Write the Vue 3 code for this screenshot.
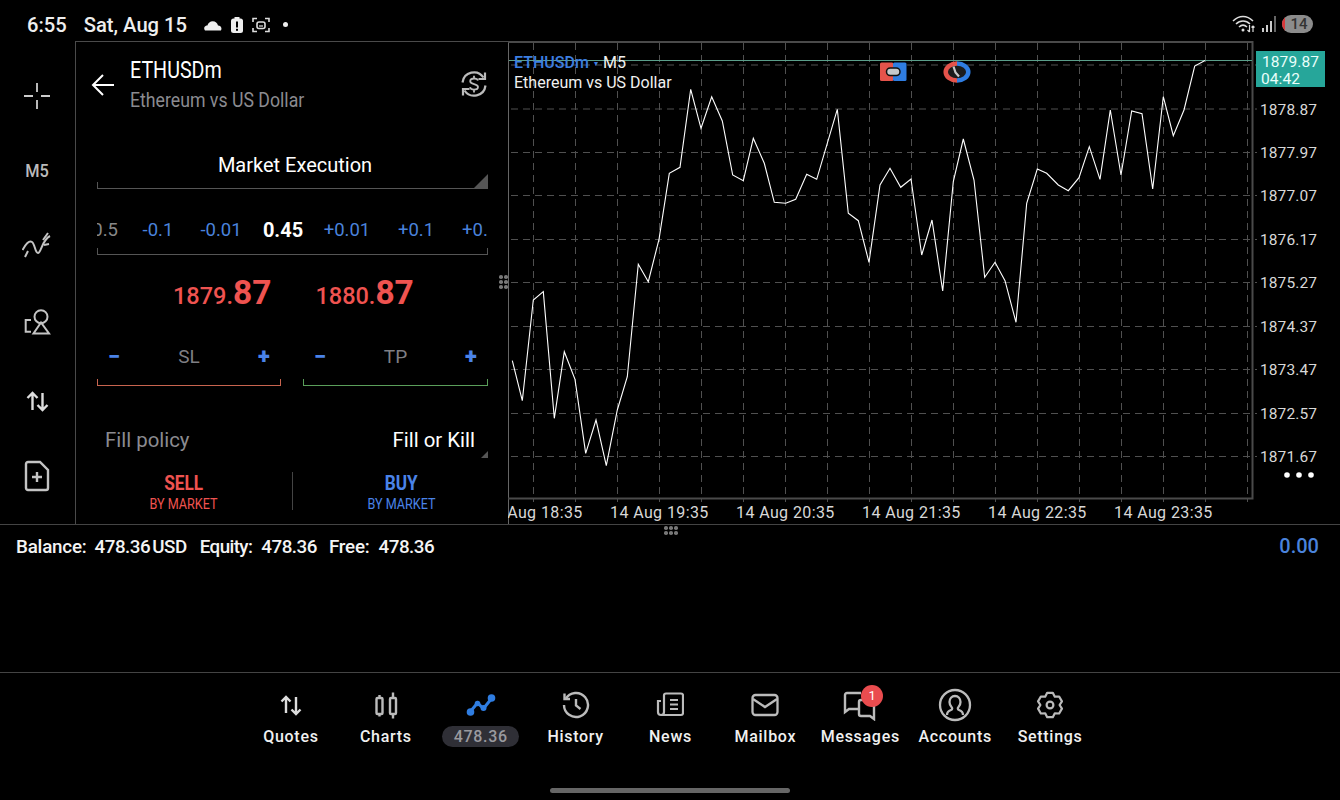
<script setup>
const pts = "512.3,360.7 522.3,400.7 533.3,300 543.3,291.7 554.3,418.3 564.3,351.7 575,379.3 585.7,453.3 596,420 606.3,465.7 617.3,410 627.3,376.7 638.3,264.3 648.3,281.7 659,239.3 669.3,173.3 680,167.3 690.7,89.3 701,128.3 711.7,96.7 722.3,121 732.7,175 743.3,180.7 753.3,138.3 764.3,163.3 774.3,202.3 785.7,203.3 795.7,199.3 806.7,174.3 816.7,179.3 837.3,109.3 848.3,213.3 858.3,220.7 869,262.3 880,185 890,168.3 900.7,187.3 911,179 921.7,255 932,220 942.7,291 953.3,181.7 963.3,139 974,180 984.7,277.3 995,262.3 1005,280.7 1016,322.3 1026.7,203.3 1037.3,169 1046.7,173.3 1058.3,185 1068.3,190.7 1079,177.7 1089.3,146.7 1100,179.3 1110.3,110 1121,175 1131.7,111 1142,113.7 1152.7,189 1163.3,96.7 1173.3,135.7 1184,110 1194.7,66 1205,60.5"

const gridX = Array.from({ length: 18 }, (_, i) => 533.5 + i * 42)
const gridY = [65, 109, 152.5, 195.5, 239.5, 282.5, 326.5, 369.5, 413.5, 456.5]
const prices = [
  ['1878.87', 109], ['1877.97', 152.5], ['1877.07', 195.5], ['1876.17', 239.5], ['1875.27', 282.5],
  ['1874.37', 326.5], ['1873.47', 369.5], ['1872.57', 413.5], ['1871.67', 456.5]
]
const times = [
  ['14 Aug 18:35', 484], ['14 Aug 19:35', 610], ['14 Aug 20:35', 736],
  ['14 Aug 21:35', 862], ['14 Aug 22:35', 988], ['14 Aug 23:35', 1114]
]
const navItems = [
  { label: 'Quotes', icon: 'quotes' }, { label: 'Charts', icon: 'charts' }, { label: '478.36', icon: 'trade', pill: true },
  { label: 'History', icon: 'history' }, { label: 'News', icon: 'news' }, { label: 'Mailbox', icon: 'mail' },
  { label: 'Messages', icon: 'msg' }, { label: 'Accounts', icon: 'acct' }, { label: 'Settings', icon: 'gear' }
]
const lots = [
  { t: '-0.1', w: 80 }, { t: '-0.01', w: 46 }, { t: '0.45', w: 78, cur: true }, { t: '+0.01', w: 50 }, { t: '+0.1', w: 88 }
]

const gearPoints = (() => {
  const p = []
  const at = (deg, r) => {
    const a = (deg * Math.PI) / 180
    return `${(14 + r * Math.cos(a)).toFixed(2)},${(14 + r * Math.sin(a)).toFixed(2)}`
  }
  for (let i = 0; i < 6; i++) {
    const a = -90 + 60 * i
    p.push(at(a - 13, 12.5), at(a + 13, 12.5), at(a + 30, 9.6))
  }
  return p.join(' ')
})()
</script>

<template>
  <div class="screen">
    <header class="status">
      <div class="st-left">
        <span class="time">6:55</span>
        <span class="date">Sat, Aug 15</span>
        <svg class="st-ic" width="20" height="14" viewBox="0 0 20 14"><path d="M2 12.500c-1.800-2.400-.3-5 2.400-5 .7-2.600 2.800-4.300 5.300-4.300 2.700 0 4.700 1.700 5.300 4.200 2.800-.2 4.400 2.800 2.900 5.100z" fill="#eee"/></svg>
        <svg class="st-ic" width="14" height="18" viewBox="0 0 14 18"><rect x="1" y="2.500" width="12" height="14.500" rx="2.500" fill="#eee"/><rect x="4.500" y="1" width="5" height="2.500" fill="#eee"/><rect x="6" y="5.500" width="2" height="6" fill="#000"/><rect x="6" y="12.800" width="2" height="2" fill="#000"/></svg>
        <svg class="st-ic" width="20" height="18" viewBox="0 0 20 18" fill="none" stroke="#ddd" stroke-width="1.600"><path d="M2 6V2.500h4M14 2.500h4V6M2 12v3.500h4M14 15.500h4V12"/><rect x="6" y="6" width="8" height="6.500" rx="2"/><path d="M8 10h4" stroke-width="1.200"/></svg>
        <span class="st-dot"></span>
      </div>
      <div class="st-right">
        <svg width="24" height="18" viewBox="0 0 24 18" fill="none" stroke="#ddd" stroke-width="1.500"><path d="M1 6c6-6 14-6 20 0M4 9c4-4 10-4 14 0M7 12c2.500-2.500 5.500-2.500 8 0"/><circle cx="11" cy="15" r="1.500" fill="#ddd" stroke="none"/><path d="M17.500 10v7M15.500 15l2 2M21 17v-6M19.500 12.500l1.500-1.500 1.500 1.500" stroke-width="1.200"/></svg>
        <svg width="16" height="18" viewBox="0 0 16 18"><rect x="1" y="13" width="2" height="4" fill="#ccc"/><rect x="5" y="10" width="2" height="7" fill="#ccc"/><rect x="9" y="6" width="2" height="11" fill="#ccc"/><rect x="13" y="1" width="2" height="16" fill="#666"/></svg>
        <span class="batt"><i></i>14</span>
      </div>
    </header>

    <div class="workspace">
      <nav class="tools">
        <div class="tool">
          <svg width="28" height="28" viewBox="0 0 28 28" stroke="#ccc" stroke-width="1.800"><path d="M1 14h9M18 14h9M14 1v9M14 18v9"/></svg>
        </div>
        <div class="tool m5">M5</div>
        <div class="tool raise">
          <svg width="30" height="28" viewBox="0 0 30 28" fill="none" stroke="#c4c4c4" stroke-width="2"><path d="M.5 18C4 12 7 8 10 10s3 11 6 11 4-13 12-17"/><path d="M3 25l3-6M21 8l5-7M22 13l5-1"/></svg>
        </div>
        <div class="tool raise">
          <svg width="28" height="28" viewBox="0 0 28 28" fill="none" stroke="#c4c4c4" stroke-width="2"><path d="M8 12H2.700v11.700H8"/><circle cx="18" cy="8.700" r="6.500"/><path d="M18 14.500 10.500 25.500H26z"/></svg>
        </div>
        <div class="tool lower">
          <svg width="25" height="24" viewBox="0 0 24 24" fill="none" stroke="#ddd" stroke-width="2.400"><path d="M7 21V4M2 9l5-5 5 5M17 4v17M12 16l5 5 5-5"/></svg>
        </div>
        <div class="tool">
          <svg width="26" height="32" viewBox="0 0 26 32" fill="none" stroke="#c4c4c4" stroke-width="2.400"><path d="M2 4a2 2 0 0 1 2-2h12l8 8v18a2 2 0 0 1-2 2H4a2 2 0 0 1-2-2z"/><path d="M13 12v10M8 17h10"/></svg>
        </div>
      </nav>

      <section class="panel">
        <div class="head">
          <svg class="back" width="24" height="24" viewBox="0 0 24 24" fill="none" stroke="#fff" stroke-width="2"><path d="M23 12H2M12 2 2 12l10 10"/></svg>
          <div class="titles">
            <div class="sym">ETHUSDm</div>
            <div class="symname">Ethereum vs US Dollar</div>
          </div>
          <svg class="swap" width="28" height="28" viewBox="0 0 28 28" fill="none" stroke="#bbb" stroke-width="2.200"><path d="M2.500 12.500A11.500 11.500 0 0 1 23.500 7.500M25.500 15.500A11.500 11.500 0 0 1 4.500 20.500"/><path d="M25 2.500v6.500h-6.500M3 25.500V19h6.500"/><path d="M18 10.500c-.5-1.400-2-2-4-2-2.400 0-3.800 1.100-3.800 2.700 0 3.800 7.800 2 7.800 5.800 0 1.600-1.600 2.600-4 2.600-2.100 0-3.600-.9-4.100-2.400M14 5.800v2.700M14 20v2.500" stroke-width="1.800"/></svg>
        </div>

        <div class="field exec">
          <span>Market Execution</span>
          <i class="corner"></i>
        </div>

        <div class="field lots">
          <span class="lot-clip first">0.5</span>
          <span v-for="l in lots" :key="l.t" class="lot" :class="{ cur: l.cur }" :style="{ width: l.w + 'px' }">{{ l.t }}</span>
          <span class="lot-clip last">+0.5</span>
        </div>

        <div class="quotes">
          <span class="price"><small>1879.</small>87</span>
          <span class="price"><small>1880.</small>87</span>
        </div>

        <div class="levels">
          <div class="level sl"><b>−</b><span>SL</span><b>+</b></div>
          <div class="level tp"><b>−</b><span>TP</span><b>+</b></div>
        </div>

        <div class="fill">
          <span class="muted">Fill policy</span>
          <span>Fill or Kill</span>
          <i class="corner small"></i>
        </div>

        <div class="actions">
          <div class="act sell"><strong>SELL</strong><em>BY MARKET</em></div>
          <div class="act buy"><strong>BUY</strong><em>BY MARKET</em></div>
        </div>
        <span class="grip side"><i v-for="n in 6" :key="n"></i></span>
      </section>

      <div class="chart">
        <svg class="chart-svg" width="832" height="483" viewBox="508 41 832 483">
          <g stroke="#505050" stroke-width="1" stroke-dasharray="7 5">
            <line v-for="x in gridX" :key="x" :x1="x" y1="43" :x2="x" y2="498"/>
            <line v-for="y in gridY" :key="y" x1="511" :y1="y" x2="1257" :y2="y"/>
          </g>
          <g stroke="#505050" stroke-width="1">
            <line v-for="x in gridX" :key="'t' + x" :x1="x" y1="498" :x2="x" y2="502"/>
          </g>
          <path d="M508.500 524V42" fill="none" stroke="#666" stroke-width="1"/>
          <path d="M508 42H1252.500V498.500H508" fill="none" stroke="#4a4a4a" stroke-width="2"/>
          <line x1="509" y1="60.500" x2="1252" y2="60.500" stroke="#5b9f8b" stroke-width="1"/>
          <polyline :points="pts" fill="none" stroke="#fff" stroke-width="1.100"/>

          <text x="514" y="68" class="c-sym">ETHUSDm</text>
          <text x="594" y="66" class="c-arrow">▾</text>
          <text x="603" y="68" class="c-txt">M5</text>
          <text x="514" y="88" class="c-txt">Ethereum vs US Dollar</text>

          <g>
            <rect x="880" y="62.500" width="13.500" height="18.500" rx="1.500" fill="#e5534b"/>
            <rect x="893" y="62.500" width="13.500" height="18.500" rx="1.500" fill="#2f7de1"/>
            <rect x="886.500" y="68" width="13.500" height="7.500" rx="3.700" fill="#c6c9cc" stroke="#111" stroke-width="1.500"/>
          </g>
          <ellipse cx="957" cy="72" rx="10" ry="8" fill="#1c1c1c"/>
          <g fill="none" stroke-width="4.500">
            <path d="M957 63.500a11.300 8.500 0 0 0 0 17" stroke="#e5534b"/>
            <path d="M957 63.500a11.300 8.500 0 0 1 0 17" stroke="#2f7de1"/>
          </g>
          <path d="M953.500 66.500 955.500 72.500l3.500 4" fill="none" stroke="#c9c9c9" stroke-width="2.200"/>

          <rect x="1256" y="51" width="69" height="36" fill="#26a69a"/>
          <text x="1262" y="66.500" class="tag">1879.87</text>
          <text x="1261" y="84" class="tag">04:42</text>

          <g v-for="p in prices" :key="p[0]">
            <text x="1260" :y="p[1] + 5.500" class="axis">{{ p[0] }}</text>
          </g>
          <g v-for="t in times" :key="t[0]">
            <text :x="t[1]" y="518" class="axis-t">{{ t[0] }}</text>
          </g>
          <g fill="#fff">
            <circle cx="1287" cy="475" r="2.800"/><circle cx="1299" cy="475" r="2.800"/><circle cx="1311" cy="475" r="2.800"/>
          </g>
        </svg>
      </div>
    </div>

    <div class="account">
      <span class="grip bottom"><i v-for="n in 6" :key="n"></i></span>
      <div class="bal">
        <span>Balance:</span><span class="v1">478.36 USD</span>
        <span class="eq">Equity:</span><span class="v2">478.36</span>
        <span>Free:</span><span class="v2">478.36</span>
      </div>
      <div class="profit">0.00</div>
    </div>

    <footer class="nav">
      <div v-for="n in navItems" :key="n.label" class="nav-item">
        <div class="nav-ic">
          <svg v-if="n.icon === 'quotes'" width="24" height="24" viewBox="0 0 24 24" fill="none" stroke="#ddd" stroke-width="2.400"><path d="M7 20V4M2.500 8.500 7 4l4.500 4.500M17 4v17M12.500 16.500 17 21l4.500-4.500"/></svg>
          <svg v-else-if="n.icon === 'charts'" width="26" height="28" viewBox="0 0 26 28" fill="none" stroke="#bbb" stroke-width="2.400"><rect x="3.500" y="7" width="6" height="16" rx="1"/><rect x="17" y="7" width="6" height="16" rx="1"/><path d="M6.500 4v3M6.500 23v2.500M20 1.500V7M20 23v4.500"/></svg>
          <svg v-else-if="n.icon === 'trade'" width="30" height="26" viewBox="0 0 30 26" fill="none" stroke="#2f7de1" stroke-width="3"><path d="M4 20 11.500 11l6 5.500L26 6"/><g fill="#2f7de1" stroke="none"><circle cx="4.500" cy="20" r="3.800"/><circle cx="11.500" cy="11.500" r="2.800"/><circle cx="17.500" cy="16" r="3"/><circle cx="25.500" cy="6" r="3.800"/></g></svg>
          <svg v-else-if="n.icon === 'history'" width="28" height="28" viewBox="0 0 28 28" fill="none" stroke="#bbb" stroke-width="2.400"><path d="M3.600 8A12 12 0 1 1 2 14"/><path d="M2.500 2.500V8H8"/><path d="M14 8v6.500l4.500 3.500"/></svg>
          <svg v-else-if="n.icon === 'news'" width="28" height="26" viewBox="0 0 28 26" fill="none" stroke="#bbb" stroke-width="2.200"><path d="M5 23a3 3 0 0 0 3-3V3.500a2 2 0 0 1 2-2h15a2 2 0 0 1 2 2V21a2 2 0 0 1-2 2H5a3 3 0 0 1-3-3V9h3"/><path d="M14 8h8M14 12.500h8M14 17h8"/></svg>
          <svg v-else-if="n.icon === 'mail'" width="28" height="24" viewBox="0 0 28 24" fill="none" stroke="#bbb" stroke-width="2.300"><rect x="1.500" y="2" width="25" height="20" rx="3"/><path d="M2 6l12 8 12-8"/></svg>
          <svg v-else-if="n.icon === 'msg'" width="34" height="32" viewBox="0 0 34 32" fill="none" stroke="#bbb" stroke-width="2.400"><path d="M15 20H6l-4 3V6a2 2 0 0 1 2-2h14"/><path d="M19 11h10a2 2 0 0 1 2 2v17l-4-3H18a2 2 0 0 1-2-2V13a2 2 0 0 1 2-2z" fill="#000"/></svg>
          <svg v-else-if="n.icon === 'acct'" width="34" height="34" viewBox="0 0 34 34" fill="none" stroke="#bbb" stroke-width="2.300"><circle cx="17" cy="17" r="15"/><path d="M9 27c0-3 1-4 4-5 1.500-.5 1.500-2 .5-3-1.500-1.500-2-3-2-5 0-3.500 2.300-6 5.500-6s5.500 2.500 5.500 6c0 2-.5 3.500-2 5-1 1-1 2.500.5 3 3 1 4 2 4 5"/></svg>
          <svg v-else width="28" height="28" viewBox="0 0 28 28" fill="none" stroke="#bbb" stroke-width="2.200" stroke-linejoin="round"><polygon :points="gearPoints"/><circle cx="14" cy="14" r="3.400"/></svg>
          <span v-if="n.icon === 'msg'" class="badge">1</span>
        </div>
        <span class="nav-label" :class="{ pill: n.pill }">{{ n.label }}</span>
      </div>
    </footer>
    <div class="home"></div>
  </div>
</template>

<style>
html, body { margin: 0; background: #000; }
</style>

<style scoped>
.screen { width: 1340px; height: 800px; background: #000; color: #fff; font-family: Roboto, "Liberation Sans", sans-serif; display: flex; flex-direction: column; overflow: hidden; position: relative; }

.status { height: 41px; flex: none; display: flex; justify-content: space-between; align-items: center; padding: 8px 27px 0 27px; box-sizing: border-box; }
.st-left { display: flex; align-items: center; color: #eee; font-size: 20.200px; font-weight: 500; }
.date { margin-left: 17px; margin-right: 12px; }
.st-ic { margin-left: 4px; margin-right: 3px; }
.st-dot { width: 5px; height: 5px; background: #eee; border-radius: 50%; margin-left: 8.500px; }
.st-right { display: flex; align-items: center; gap: 5px; margin-top: -2px; }
.batt { width: 31px; height: 18px; border-radius: 9px; background: #8c8c8c; color: #333; font-size: 15px; font-weight: 500; text-align: center; line-height: 18px; position: relative; overflow: hidden; text-indent: 3px; }
.batt i { position: absolute; left: 0; top: 0; bottom: 0; width: 3px; background: #d9383a; }

.workspace { height: 483px; flex: none; display: flex; border-bottom: 1px solid #444; box-sizing: content-box; }

.tools { width: 75px; flex: none; display: grid; grid-template-rows: repeat(6, 76px); padding-top: 17px; box-sizing: border-box; }
.tool { display: flex; align-items: center; justify-content: center; width: 74px; color: #bbb; box-sizing: border-box; }
.raise { padding-bottom: 4px; }
.lower { padding-top: 2px; }
.m5 { font-size: 19px; font-weight: 500; transform: scaleX(.86) translateY(-2px); }

.panel { width: 433px; flex: none; box-sizing: border-box; border-left: 1px solid #4a4a4a; border-top: 1px solid #4a4a4a; position: relative; padding: 0 20px 0 21px; display: flex; flex-direction: column; }
.head { height: 73px; display: flex; align-items: center; position: relative; }
.back { margin-left: -6px; margin-top: 12px; }
.titles { margin-left: 15px; margin-top: 12px; flex: 1; }
.sym { font-size: 24px; line-height: 30px; transform: scaleX(.82); transform-origin: left; }
.symname { font-size: 20px; line-height: 30px; color: #8b8b90; transform: scaleX(.885); transform-origin: left; white-space: nowrap; }
.swap { margin-top: 10px; }

.field { position: relative; border-bottom: 1px solid #555; box-sizing: border-box; }
.field::before { content: ""; position: absolute; left: 0; bottom: 0; height: 6px; border-left: 1px solid #555; }
.exec { height: 74px; display: flex; align-items: flex-end; justify-content: center; font-size: 20px; padding-bottom: 11px; padding-left: 5px; }
.corner { position: absolute; right: 0; bottom: 0; width: 0; height: 0; border-left: 14px solid transparent; border-bottom: 14px solid #555; }
.corner.small { border-left-width: 7px; border-bottom-width: 7px; }

.lots { height: 66px; display: flex; align-items: flex-end; padding-bottom: 12px; font-size: 18.500px; overflow: hidden; line-height: 24px; }
.lots::after { content: ""; position: absolute; right: 0; bottom: 0; height: 6px; border-right: 1px solid #555; }
.lot { text-align: center; flex: none; color: #4a83dc; }
.lot.cur { color: #fff; font-weight: 700; font-size: 20px; }
.lot-clip { flex: none; overflow: hidden; white-space: nowrap; }
.lot-clip.first { width: 21px; color: #888; direction: rtl; }
.lot-clip.last { width: 28px; padding-left: 2px; box-sizing: border-box; color: #4a83dc; }

.quotes { height: 76px; display: flex; padding-left: 76px; gap: 44px; align-items: center; }
.price { font-size: 33.500px; font-weight: 700; color: #ef5350; line-height: 1; }
.price small { font-size: 23.500px; font-weight: 500; }

.levels { display: flex; justify-content: space-between; height: 55px; }
.level { width: 184px; height: 55px; box-sizing: border-box; border-bottom: 1px solid; position: relative; display: flex; align-items: center; justify-content: space-between; padding: 0 9px 3px 9px; font-size: 19px; }
.level::before, .level::after { content: ""; position: absolute; bottom: 0; height: 6px; border-left: 1px solid; }
.level::before { left: 0; }
.level::after { right: 0; }
.level b { color: #4a83e8; font-size: 22px; font-weight: 900; width: 16px; text-align: center; }
.level span { color: #7f7f84; }
.sl { border-color: #c8644f; }
.sl::before, .sl::after { border-color: #c8644f; }
.tp { border-color: #5a9e5a; width: 185px; }
.tp::before, .tp::after { border-color: #5a9e5a; }

.fill { position: relative; height: 72px; display: flex; justify-content: space-between; align-items: flex-end; font-size: 20.400px; padding: 0 13px 3px 8px; box-sizing: border-box; }
.fill span { line-height: 30px; }
.muted { color: #8b8b90; }

.actions { display: flex; align-items: center; height: 65px; }
.act { display: flex; flex-direction: column; align-items: center; height: 38px; box-sizing: border-box; }
.act strong { font-size: 20px; font-weight: 700; line-height: 22px; transform: scaleX(.86); }
.act em { font-size: 15px; font-style: normal; line-height: 20px; transform: scaleX(.84); white-space: nowrap; }
.sell { width: 196px; border-right: 1px solid #444; color: #ef5350; padding-right: 22px; }
.buy { width: 195px; color: #4a83e8; padding-left: 21px; }

.grip { display: grid; gap: 1.500px; position: absolute; }
.grip i { width: 3.600px; height: 3.600px; background: #777; border-radius: 50%; }
.grip.side { grid-template-columns: repeat(2, 3.600px); right: 0; top: 233px; }
.grip.bottom { grid-template-columns: repeat(3, 3.600px); left: 664px; top: 1px; }

.chart { flex: 1; position: relative; overflow: hidden; }
.chart-svg { display: block; }
.c-sym { font-family: Roboto, sans-serif; font-size: 16px; font-weight: 500; fill: #3d7fe0; }
.c-arrow { font-size: 8px; fill: #3d7fe0; font-family: "DejaVu Sans", sans-serif; }
.c-txt { font-family: Roboto, sans-serif; font-size: 16px; fill: #f0f0f0; }
.tag { font-family: Roboto, sans-serif; font-size: 15.500px; fill: #eafffb; letter-spacing: .1px; }
.axis { font-family: Roboto, sans-serif; font-size: 15.500px; fill: #d8d8d8; letter-spacing: .1px; }
.axis-t { font-family: Roboto, sans-serif; font-size: 16px; fill: #d8d8d8; letter-spacing: .4px; }

.account { height: 148px; flex: none; border-bottom: 1px solid #444; box-sizing: border-box; position: relative; display: flex; justify-content: space-between; align-items: flex-start; padding: 11px 21px 0 16px; }
.bal { display: flex; font-size: 18.800px; font-weight: 500; line-height: 22px; color: #f4f4f4; letter-spacing: -.2px; }
.v1 { margin-left: 8px; margin-right: 13px; word-spacing: -2px; letter-spacing: -.5px; }
.eq { letter-spacing: -.6px; }
.v2 { margin-left: 9px; margin-right: 12px; letter-spacing: -.5px; }
.profit { font-size: 20px; font-weight: 500; color: #4a83dc; line-height: 18px; margin-top: 1px; }

.nav { display: grid; grid-template-columns: repeat(9, 94.900px); justify-content: center; padding-top: 14px; padding-left: 1px; }
.nav-item { display: flex; flex-direction: column; align-items: center; }
.nav-ic { height: 36px; display: flex; align-items: center; justify-content: center; position: relative; }
.nav-label { font-size: 16px; font-weight: 500; letter-spacing: .7px; line-height: 21px; margin-top: 3px; color: #f0f0f0; white-space: nowrap; }
.nav-label.pill { background: #2f2f36; color: #9a9a9f; padding: 0 11.500px; border-radius: 11px; }
.badge { position: absolute; left: 18px; top: -2px; width: 22px; height: 22px; background: #ea4c4f; border-radius: 50%; color: #fff; font-size: 13px; text-align: center; line-height: 22px; }

.home { position: absolute; left: 550px; top: 788px; width: 240px; height: 5px; border-radius: 3px; background: #666; }
</style>
